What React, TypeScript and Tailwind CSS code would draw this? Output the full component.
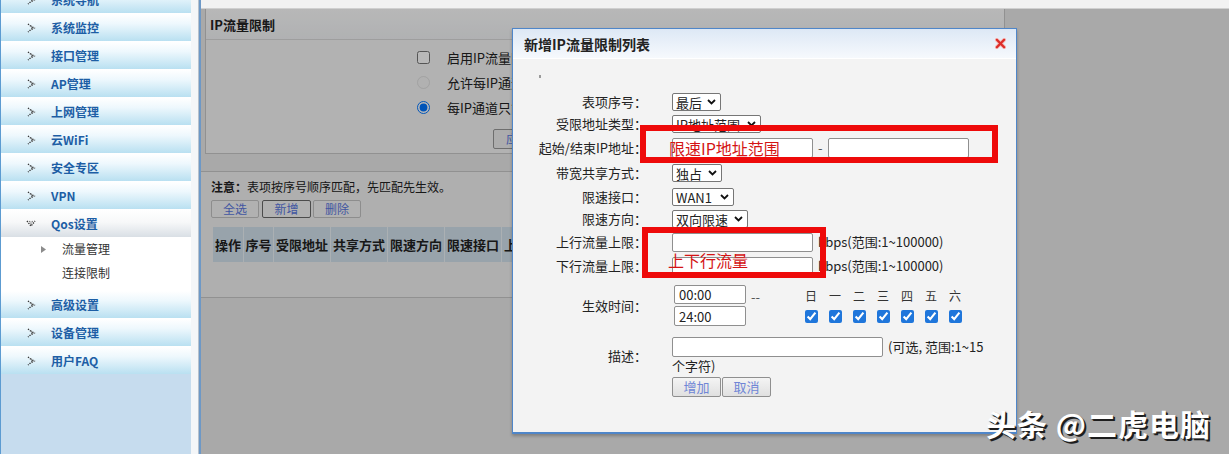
import React from "react";

function NavIcon({ down }: { down?: boolean }) {
  if (down) {
    return (
      <svg width="10" height="8" viewBox="0 0 10 8" className="shrink-0">
        <path d="M1 1 L5 6 L9 1" fill="none" stroke="#333" strokeWidth="1.4" strokeDasharray="1.3 1.1" />
        <path d="M3.5 1 L5 3 L6.5 1" fill="none" stroke="#555" strokeWidth="1.1" strokeDasharray="1 1" />
      </svg>
    );
  }
  return (
    <svg width="9" height="10" viewBox="0 0 9 10" className="shrink-0">
      <path d="M1 1 L6 5 L1 9" fill="none" stroke="#333" strokeWidth="1.4" strokeDasharray="1.3 1.1" />
      <path d="M4 3 L7.5 5 L4 7" fill="none" stroke="#666" strokeWidth="1.1" strokeDasharray="1 1" />
    </svg>
  );
}

function NavItem({ label, down }: { label: string; down?: boolean }) {
  const bg = down
    ? "bg-[linear-gradient(to_bottom,#ffffff_0%,#f7f8f9_45%,#d9dfe5_100%)]"
    : "bg-[linear-gradient(to_bottom,#ffffff_0%,#eef8fd_35%,#b9e0f1_100%)]";
  return (
    <div className={`h-[28px] flex items-center pl-[25px] border-t border-white ${bg}`}>
      <div className="w-[10px] flex justify-center">
        <NavIcon down={down} />
      </div>
      <span className="ml-[15px] text-[12px] font-bold text-[#1d5ea5] leading-none">{label}</span>
    </div>
  );
}

function Sidebar() {
  const top = ["系统导航", "系统监控", "接口管理", "AP管理", "上网管理", "云WiFi", "安全专区", "VPN"];
  const bottom = ["高级设置", "设备管理", "用户FAQ"];
  return (
    <div className="w-[191px] shrink-0 border-l border-[#5c9bd1] bg-[#c6dcee] flex flex-col">
      <div className="mt-[-15px]">
        {top.map((t) => (
          <NavItem key={t} label={t} />
        ))}
        <NavItem label="Qos设置" down />
        <div className="bg-white pb-[6px]">
          <div className="h-[24px] flex items-center pl-[40px]">
            <svg width="5" height="7" viewBox="0 0 5 7" className="shrink-0">
              <polygon points="0,0 5,3.5 0,7" fill="#8c8c8c" />
            </svg>
            <span className="ml-[16px] text-[12px] text-[#333] leading-none">流量管理</span>
          </div>
          <div className="h-[23px] flex items-center pl-[61px]">
            <span className="text-[12px] text-[#333] leading-none">连接限制</span>
          </div>
        </div>
        {bottom.map((t) => (
          <NavItem key={t} label={t} />
        ))}
      </div>
    </div>
  );
}

function Main() {
  const cols = [
    ["操作", "w-[31px]"],
    ["序号", "w-[30px]"],
    ["受限地址", "w-[57px]"],
    ["共享方式", "w-[57px]"],
    ["限速方向", "w-[57px]"],
    ["限速接口", "w-[57px]"],
    ["上行速率", "w-[57px]"],
    ["下行速率", "w-[57px]"],
    ["生效时间", "w-[57px]"],
    ["描述", "w-[45px]"],
  ];
  return (
    <div className="relative flex-1 border-l-2 border-[#6d98c6] bg-[#ebebeb] text-[#222]">
      <div className="h-[9px] bg-[#f2f2f2] border-b border-[#d0d0d0]" />
      <div className="ml-[4px] w-[800px] border border-t-0 border-[#c9c9c9] bg-[#f7f7f7]">
        <div className="h-[31px] flex items-center pl-[4px] bg-[linear-gradient(to_bottom,#ffffff,#f4f6f8)] border-b border-[#dcdcdc]">
          <span className="text-[13px] font-bold leading-none">IP流量限制</span>
        </div>
        <div className="h-[113px] pl-[211px] pt-[5px] text-[13px]">
          <div className="h-[25px] flex items-center">
            <input type="checkbox" className="w-[13px] h-[13px]" readOnly />
            <span className="ml-[17px]">启用IP流量限制</span>
          </div>
          <div className="h-[25px] flex items-center">
            <input type="radio" name="m" className="w-[13px] h-[13px] opacity-50" disabled />
            <span className="ml-[17px]">允许每IP通道使用空闲带宽</span>
          </div>
          <div className="h-[25px] flex items-center">
            <input type="radio" name="m2" className="w-[13px] h-[13px]" defaultChecked />
            <span className="ml-[17px]">每IP通道只能使用限定带宽</span>
          </div>
          <div className="mt-[9px] ml-[76px] w-[50px] h-[20px] border border-[#999] rounded-[2px] bg-[#f0f0f0] flex items-center justify-center text-[12px] text-[#5b78e0]">
            应用
          </div>
        </div>
      </div>
      <div className="mt-[17px] w-[814px] h-[127px] border-t border-b border-r border-[#c9c9c9] bg-[#f3f3f3] pl-[10px] pt-[7px]">
        <div className="text-[12px] leading-[16px]">
          <span className="font-bold">注意：</span>表项按序号顺序匹配，先匹配先生效。
        </div>
        <div className="mt-[5px] flex text-[12px] text-[#5b78e0]">
          <div className="w-[48px] h-[18px] border border-[#c4c4c4] rounded-[2px] bg-[#f6f6f6] flex items-center justify-center">全选</div>
          <div className="ml-[3px] w-[49px] h-[18px] border border-[#6a6a6a] rounded-[2px] bg-[#f6f6f6] flex items-center justify-center">新增</div>
          <div className="ml-[2px] w-[48px] h-[18px] border border-[#c4c4c4] rounded-[2px] bg-[#f6f6f6] flex items-center justify-center">删除</div>
        </div>
        <div className="mt-[9px] ml-[2px] flex h-[35px] bg-[#d3e2ee] w-fit">
          {cols.map(([t, w]) => (
            <div key={t} className={`${w} flex items-center justify-center border-r border-[#eef4f8] text-[13px] font-semibold`}>
              {t}
            </div>
          ))}
        </div>
      </div>
      <div className="absolute top-[9px] left-0 right-0 bottom-0 bg-black/[0.28]" />
    </div>
  );
}

function Sel({ cls, children }: { cls: string; children: React.ReactNode }) {
  return (
    <div className={`${cls} h-[18px] flex items-center justify-between border border-[#767676] rounded-[2px] bg-white pl-[3px] pr-[4px] text-[13px] leading-none overflow-hidden whitespace-nowrap`}>
      <span>{children}</span>
      <svg width="9" height="6" viewBox="0 0 9 6" className="shrink-0 ml-[3px]">
        <path d="M1 1 L4.5 4.5 L8 1" fill="none" stroke="#111" strokeWidth="1.8" />
      </svg>
    </div>
  );
}

function Box({ cls, children }: { cls: string; children?: React.ReactNode }) {
  return (
    <div className={`${cls} border border-[#8f8f8f] rounded-[2px] bg-white pl-[4px] flex items-center text-[13px] leading-none`}>
      {children}
    </div>
  );
}

function Row({ label, h, children }: { label: string; h: string; children?: React.ReactNode }) {
  return (
    <div className={`flex items-center ${h}`}>
      <div className="w-[134px] shrink-0 text-right whitespace-nowrap">{label}</div>
      <div className="ml-[25px] flex items-center">{children}</div>
    </div>
  );
}

function Dialog() {
  const days = ["日", "一", "二", "三", "四", "五", "六"];
  return (
    <div className="absolute left-[512px] top-[28px] w-[505px] h-[406px] border border-[#4f86c9] border-b-2 bg-[#f3f3f3] shadow-[0_2px_3px_rgba(0,0,0,0.25)] text-[13px] leading-[16px] text-[#222]">
      <div className="h-[30px] flex items-center justify-between pl-[11px] pr-[10px] bg-[linear-gradient(to_bottom,#dde8f5,#f6f9fd)] border-b border-white">
        <span className="text-[14px] font-bold leading-none">新增IP流量限制列表</span>
        <svg width="11" height="11" viewBox="0 0 12 12">
          <path d="M2 2 L10 10 M10 2 L2 10" stroke="#f4b7b4" strokeWidth="4.2" strokeLinecap="round" />
          <path d="M2 2 L10 10 M10 2 L2 10" stroke="#dc2c28" strokeWidth="2.4" strokeLinecap="round" />
        </svg>
      </div>
      <div className="h-[32px] pl-[26px] pt-[16px]">
        <div className="w-[2px] h-[3px] bg-[#9a9a9a]" />
      </div>
      <Row label="表项序号：" h="h-[22px]">
        <Sel cls="w-[49px]">最后</Sel>
      </Row>
      <Row label="受限地址类型：" h="h-[22px]">
        <Sel cls="w-[89px]">IP地址范围</Sel>
      </Row>
      <Row label="起始/结束IP地址：" h="h-[26px]">
        <Box cls="w-[141px] h-[20px]" />
        <span className="mx-[5px] text-[#555]">-</span>
        <Box cls="w-[141px] h-[20px]" />
      </Row>
      <Row label="带宽共享方式：" h="h-[24px]">
        <Sel cls="w-[50px]">独占</Sel>
      </Row>
      <Row label="限速接口：" h="h-[24px]">
        <Sel cls="w-[62px]">WAN1</Sel>
      </Row>
      <Row label="限速方向：" h="h-[20px]">
        <Sel cls="w-[76px]">双向限速</Sel>
      </Row>
      <Row label="上行流量上限：" h="h-[26px]">
        <Box cls="w-[141px] h-[19px]" />
        <span className="ml-[5px] whitespace-nowrap">kbps(范围:1~100000)</span>
      </Row>
      <Row label="下行流量上限：" h="h-[22px]">
        <Box cls="w-[141px] h-[19px]" />
        <span className="ml-[5px] whitespace-nowrap">kbps(范围:1~100000)</span>
      </Row>
      <div className="mt-[8px] flex h-[42px]">
        <div className="w-[134px] shrink-0 flex items-center justify-end">生效时间：</div>
        <div className="ml-[27px] flex flex-col gap-[2px]">
          <Box cls="w-[72px] h-[19px]">00:00</Box>
          <Box cls="w-[72px] h-[20px]">24:00</Box>
        </div>
        <div className="ml-[5px] w-[20px] pt-[4px] text-[#555]">--</div>
        <div className="ml-[28px] flex">
          {days.map((d) => (
            <div key={d} className="w-[24px] flex flex-col items-center">
              <div className="pt-[3px] h-[19px] text-[12px] leading-[16px] text-[#333]">{d}</div>
              <input
                type="checkbox"
                defaultChecked
                className="mt-[6px] w-[13px] h-[13px] accent-[#1f76db]"
              />
            </div>
          ))}
        </div>
      </div>
      <div className="mt-[10px] flex h-[38px]">
        <div className="w-[134px] shrink-0 flex items-center justify-end">描述：</div>
        <div className="ml-[25px] flex flex-col">
          <div className="flex items-center">
            <Box cls="w-[211px] h-[20px]" />
            <span className="ml-[5px] whitespace-nowrap">(可选, 范围:1~15</span>
          </div>
          <div className="mt-[1px]">个字符)</div>
        </div>
      </div>
      <div className="mt-[2px] ml-[159px] flex gap-[1px] text-[13px] text-[#6f86d6]">
        <div className="w-[49px] h-[20px] border border-[#8f8f8f] rounded-[2px] bg-[linear-gradient(to_bottom,#f4f4f4,#e0e0e0)] flex items-center justify-center">增加</div>
        <div className="w-[49px] h-[20px] border border-[#8f8f8f] rounded-[2px] bg-[linear-gradient(to_bottom,#f4f4f4,#e0e0e0)] flex items-center justify-center">取消</div>
      </div>

      <div className="absolute left-[127px] top-[96px] w-[358px] h-[38px] border-[6px] border-[#ee0a0a]" />
      <div className="absolute left-[156px] top-[109px] text-[16px] leading-[20px] text-[#d41414] whitespace-nowrap">限速IP地址范围</div>
      <div className="absolute left-[129px] top-[198px] w-[184px] h-[51px] border-[6px] border-[#ee0a0a]" />
      <div className="absolute left-[155px] top-[221px] text-[16px] leading-[20px] text-[#d41414] whitespace-nowrap">上下行流量</div>
    </div>
  );
}

export default function App() {
  return (
    <div className="relative w-[1229px] h-[454px] overflow-hidden flex bg-white font-['Noto_Sans_CJK_SC','Noto_Sans',sans-serif]">
      <Sidebar />
      <div className="w-[8px] shrink-0 bg-[#f4f6f8] border-r border-[#b7c1cc]" />
      <Main />
      <Dialog />
      <div className="absolute left-[986px] top-[404px] text-[30px] leading-[38px] font-bold text-white whitespace-nowrap tracking-[1px] [text-shadow:2px_2px_0_#1e1e1e,1px_1px_1px_#333]">
        头条 @二虎电脑
      </div>
    </div>
  );
}
